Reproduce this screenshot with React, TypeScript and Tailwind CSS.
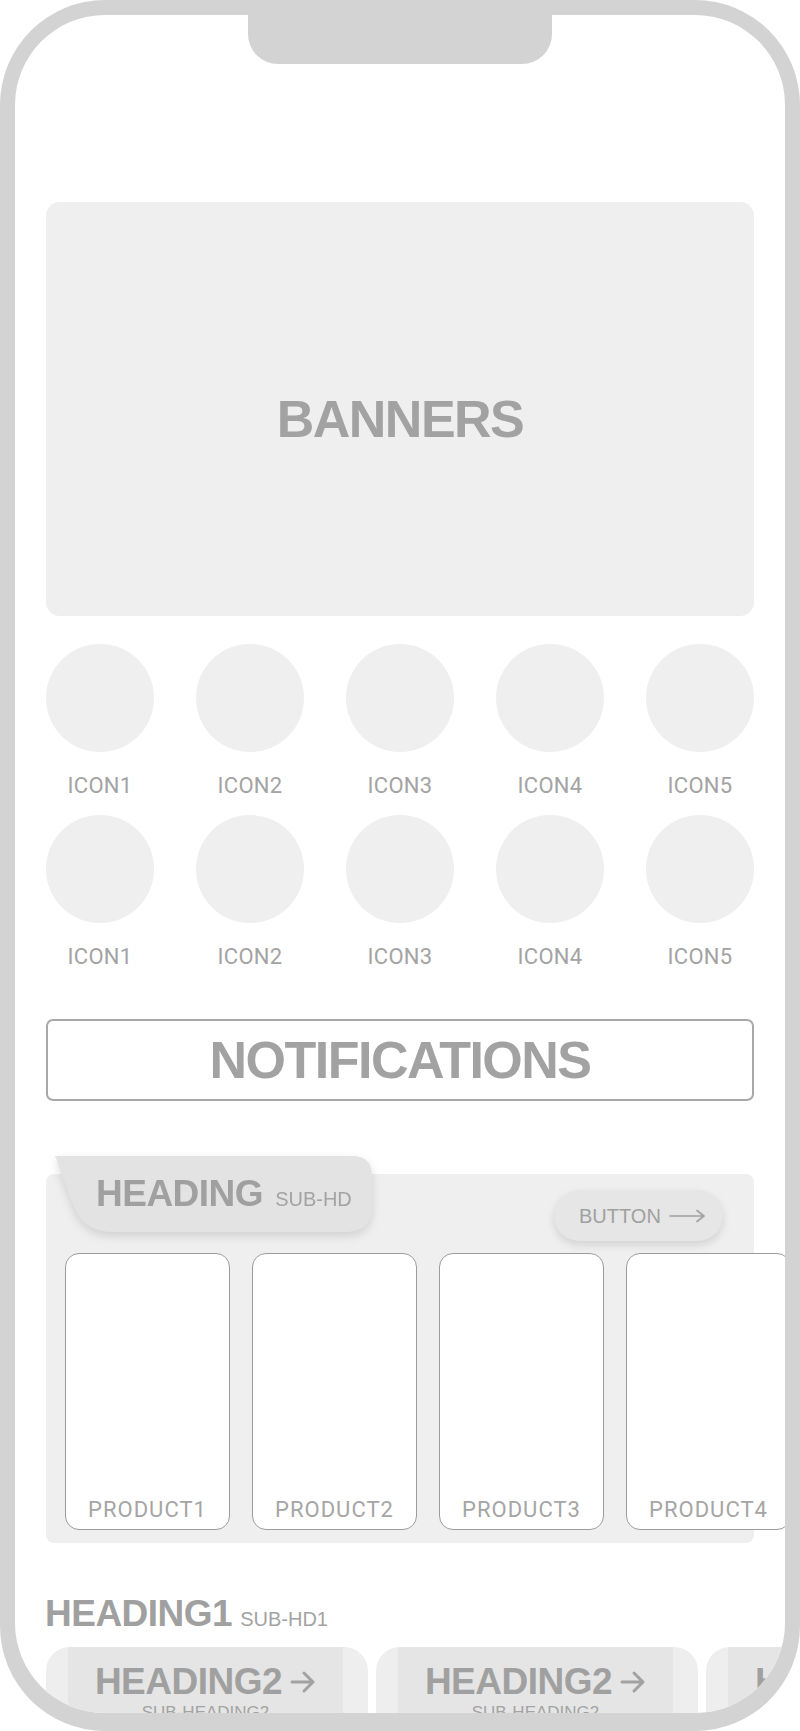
import React from 'react';

const head = "font-['Liberation_Sans',Arial,sans-serif]";
const label = "font-['Roboto','Liberation_Sans',sans-serif]";

const icons = ['ICON1', 'ICON2', 'ICON3', 'ICON4', 'ICON5'];
const products = ['PRODUCT1', 'PRODUCT2', 'PRODUCT3', 'PRODUCT4'];

const IconRow: React.FC<{ className?: string }> = ({ className = '' }) => (
  <div className={`flex justify-between ${className}`}>
    {icons.map((name) => (
      <div key={name} className="flex w-[108px] flex-col items-center">
        <div className="h-[108px] w-[108px] rounded-full bg-[#efefef]" />
        <span className={`${label} mt-[20px] text-[22px] leading-[28px] tracking-[0.3px] text-[#a3a3a3]`}>{name}</span>
      </div>
    ))}
  </div>
);

const LongArrow = () => (
  <svg width="36" height="14" viewBox="0 0 36 14" fill="none" stroke="#a0a0a0" strokeWidth="1.6" strokeLinecap="round">
    <path d="M1 7H35M28 1.5L35 7L28 12.5" />
  </svg>
);

const ShortArrow = () => (
  <svg width="26" height="24" viewBox="0 0 26 24" fill="none" stroke="#a2a2a2" strokeWidth="3" strokeLinecap="round" strokeLinejoin="round">
    <path d="M2 12H23M14 3L23 12L14 21" />
  </svg>
);

const Tab = () => (
  <div className="absolute left-0 top-0 h-[76px] w-[326px] drop-shadow-[0_4px_5px_rgba(0,0,0,0.13)]">
    <svg className="absolute inset-0" width="326" height="76" viewBox="0 0 326 76">
      <path d="M8 0H306Q326 0 326 20V50Q326 76 300 76H66Q36 76 26 46L12 8Q10 0 8 0Z" fill="#e3e3e3" />
    </svg>
    <div className="relative flex items-baseline gap-[12px] pl-[50px] pt-[17px]">
      <span className={`${head} text-[37px] font-bold leading-[42px] tracking-[-0.5px] text-[#a0a0a0]`}>HEADING</span>
      <span className={`${head} text-[20px] leading-[24px] text-[#a3a3a3]`}>SUB-HD</span>
    </div>
  </div>
);

const BottomCard = () => (
  <div className="flex h-[120px] w-[322px] shrink-0 overflow-hidden rounded-t-[24px] bg-[#eeeeee]">
    <div className="ml-[22px] mr-[25px] flex flex-1 flex-col items-center bg-[#e5e5e5] pt-[14px]">
      <div className="flex items-center gap-[8px]">
        <span className={`${head} text-[37px] font-bold leading-[42px] tracking-[-0.5px] text-[#a0a0a0]`}>HEADING2</span>
        <ShortArrow />
      </div>
      <span className={`${head} text-[17px] leading-[20px] text-[#a3a3a3]`}>SUB-HEADING2</span>
    </div>
  </div>
);

export default function App() {
  return (
    <div className="h-[1731px] w-[800px] bg-white">
      <div className="h-full rounded-[105px] bg-[#d3d3d3] px-[15px] pb-[18px] pt-[15px]">
        <div className="relative h-full overflow-hidden rounded-[90px] bg-white">
          {/* notch */}
          <div className="absolute left-[233px] top-0 z-10 h-[49px] w-[304px] rounded-b-[30px] bg-[#d3d3d3]" />

          <div className="px-[31px] pt-[187px]">
            {/* banner */}
            <div className="flex h-[414px] items-center justify-center rounded-[14px] bg-[#efefef] pt-[20px]">
              <span className={`${head} text-[52px] font-bold leading-[58px] tracking-[-1.5px] text-[#a2a2a2]`}>BANNERS</span>
            </div>

            <IconRow className="mt-[28px]" />
            <IconRow className="mt-[15px]" />

            {/* notifications */}
            <div className="mt-[48px] flex h-[82px] items-center justify-center rounded-[7px] border-2 border-[#a8a8a8]">
              <span className={`${head} text-[52px] font-bold leading-[58px] tracking-[-1.5px] text-[#a2a2a2]`}>NOTIFICATIONS</span>
            </div>

            {/* product panel */}
            <div className="relative mt-[55px] pt-[18px]">
              <div className="h-[369px] rounded-[8px] bg-[#efefef]">
                <div className="flex justify-end pr-[31px] pt-[16px]">
                  <div className="flex h-[51px] w-[169px] items-center gap-[8px] rounded-full bg-[#e6e6e6] pl-[25px] shadow-[0_4px_8px_rgba(0,0,0,0.12)]">
                    <span className={`${head} text-[20px] leading-[24px] text-[#a0a0a0]`}>BUTTON</span>
                    <LongArrow />
                  </div>
                </div>
                <div className="mt-[12px] flex gap-[22px] pl-[19px]">
                  {products.map((p) => (
                    <div key={p} className="flex h-[277px] w-[165px] shrink-0 flex-col items-center justify-end rounded-[14px] border border-[#9c9c9c] bg-white pb-[6px]">
                      <span className={`${label} text-[22px] leading-[26px] tracking-[1px] text-[#a5a5a5]`}>{p}</span>
                    </div>
                  ))}
                </div>
              </div>
              <Tab />
            </div>

            {/* heading 1 */}
            <div className="-ml-px mt-[50px] flex items-baseline gap-[8px]">
              <span className={`${head} text-[37px] font-bold leading-[42px] tracking-[-0.5px] text-[#a0a0a0]`}>HEADING1</span>
              <span className={`${head} text-[20px] leading-[24px] text-[#a3a3a3]`}>SUB-HD1</span>
            </div>

            <div className="mt-[12px] flex gap-[8px]">
              <BottomCard />
              <BottomCard />
              <BottomCard />
            </div>
          </div>
        </div>
      </div>
    </div>
  );
}
